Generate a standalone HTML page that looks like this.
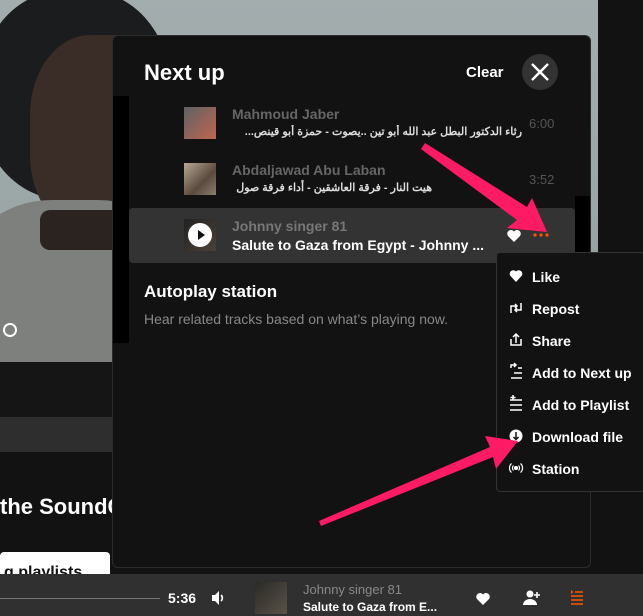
<!DOCTYPE html>
<html><head><meta charset="utf-8"><style>
*{margin:0;padding:0;box-sizing:border-box}
body{width:643px;height:616px;overflow:hidden;background:#121212;font-family:"Liberation Sans","Noto Sans CJK SC",sans-serif;position:relative;color:#fff}
.abs{position:absolute}
.b{font-weight:bold}
</style></head><body>
<!-- photo -->
<div class="abs" style="left:0;top:0;width:598px;height:362px;background:linear-gradient(180deg,#a3adae 0%,#9ba6a6 60%,#8e9592 100%);overflow:hidden">
 <div class="abs" style="left:-20px;top:-10px;width:190px;height:210px;border-radius:45%;background:#1a1c1e"></div>
 <div class="abs" style="left:30px;top:35px;width:150px;height:200px;border-radius:40%;background:#3a2c27"></div>
 <div class="abs" style="left:-40px;top:200px;width:230px;height:200px;border-radius:40%;background:#7d807c"></div>
 <div class="abs" style="left:40px;top:210px;width:90px;height:40px;background:#2a2320;border-radius:10px"></div>
 <div class="abs" style="left:3px;top:323px;width:14px;height:14px;border:2px solid #fff;border-radius:50%"></div>
</div>
<div class="abs" style="left:0;top:362px;width:598px;height:55px;background:#151515"></div>
<div class="abs" style="left:0;top:417px;width:598px;height:35px;background:#2e2e2e"></div>
<div class="abs b" style="left:0;top:494px;font-size:22px;white-space:nowrap">the SoundCloud</div>
<div class="abs" style="left:0;top:552px;width:110px;height:30px;background:#fff;border-radius:4px;color:#111;font-weight:bold;font-size:16px;padding:12px 0 0 4px;overflow:hidden">g playlists</div>
<!-- panel -->
<div class="abs" style="left:112px;top:35px;width:479px;height:533px;background:#121212;border:1px solid #2c2c2c;border-radius:6px;overflow:hidden">
 <div class="abs" style="left:0;top:60px;width:16px;height:247px;background:#000"></div>
 <div class="abs" style="left:462px;top:160px;width:16px;height:70px;background:#000"></div>
 <div class="abs b" style="left:31px;top:24px;font-size:22px">Next up</div>
 <div class="abs b" style="left:353px;top:28px;font-size:15px">Clear</div>
 <div class="abs" style="left:409px;top:18px;width:36px;height:36px;border-radius:50%;background:#333"><svg width="36" height="36"><path d="M10 10L26 26M26 10L10 26" stroke="#fff" stroke-width="2.4"/></svg></div>
 <!-- row1 -->
 <div class="abs" style="left:71px;top:71px;width:32px;height:32px;background:linear-gradient(135deg,#5d6266,#c0654f)"></div>
 <div class="abs b" style="left:119px;top:70px;font-size:14px;color:#666">Mahmoud Jaber</div>
 <div class="abs b" style="left:119px;top:89px;font-size:11px;color:#ddd;white-space:nowrap;width:290px;overflow:hidden;direction:rtl">رثاء الدكتور البطل عبد الله أبو تين ..يصوت - حمزة أبو قينص...</div>
 <div class="abs" style="left:416px;top:80px;font-size:13px;color:#555">6:00</div>
 <!-- row2 -->
 <div class="abs" style="left:71px;top:127px;width:32px;height:32px;background:linear-gradient(135deg,#b7a995,#5a4a3e 60%,#8a8170)"></div>
 <div class="abs b" style="left:119px;top:126px;font-size:14px;color:#666">Abdaljawad Abu Laban</div>
 <div class="abs b" style="left:119px;top:145px;font-size:11px;color:#ddd;white-space:nowrap;direction:rtl;width:200px;text-align:right">هيت النار - فرقة العاشقين - أداء فرقة صول</div>
 <div class="abs" style="left:416px;top:136px;font-size:13px;color:#555">3:52</div>
 <!-- row3 -->
 <div class="abs" style="left:16px;top:172px;width:446px;height:55px;background:#333;border-radius:4px"></div>
 <div class="abs" style="left:71px;top:183px;width:32px;height:32px;background:linear-gradient(135deg,#222,#4a4036)"></div>
 <div class="abs" style="left:75px;top:187px;width:24px;height:24px;border-radius:50%;background:#fff"><svg width="24" height="24"><path d="M10 7L17 12L10 17Z" fill="#111"/></svg></div>
 <div class="abs b" style="left:119px;top:182px;font-size:14px;color:#777">Johnny singer 81</div>
 <div class="abs b" style="left:119px;top:201px;font-size:14px;color:#fff;white-space:nowrap">Salute to Gaza from Egypt - Johnny ...</div>
 <svg class="abs" style="left:394px;top:193px" width="14" height="13"><path d="M7 13L1 7A3.3 3.3 0 0 1 7 2.5A3.3 3.3 0 0 1 13 7Z" fill="#fff"/></svg>
 <div class="abs b" style="left:31px;top:246px;font-size:17px">Autoplay station</div>
 <div class="abs" style="left:31px;top:275px;font-size:14px;color:#888">Hear related tracks based on what’s playing now.</div>
</div>
<!-- menu -->
<div class="abs" style="left:496px;top:252px;width:150px;height:240px;background:#121212;border:1px solid #333;border-radius:4px">
 <div class="abs b" style="left:35px;top:15px;font-size:14px;line-height:18px">Like</div>
 <div class="abs b" style="left:35px;top:47px;font-size:14px;line-height:18px">Repost</div>
 <div class="abs b" style="left:35px;top:79px;font-size:14px;line-height:18px">Share</div>
 <div class="abs b" style="left:35px;top:111px;font-size:14px;line-height:18px;white-space:nowrap">Add to Next up</div>
 <div class="abs b" style="left:35px;top:143px;font-size:14px;line-height:18px;white-space:nowrap">Add to Playlist</div>
 <div class="abs b" style="left:35px;top:175px;font-size:14px;line-height:18px;white-space:nowrap">Download file</div>
 <div class="abs b" style="left:35px;top:207px;font-size:14px;line-height:18px">Station</div>
 <svg class="abs" style="left:12px;top:16px" width="16" height="220" fill="none" stroke="#fff" stroke-width="1.5">
  <path d="M7 13L1.5 7A3.2 3.2 0 0 1 7 2.5A3.2 3.2 0 0 1 12.5 7Z" fill="#fff" stroke="none"/>
  <path d="M2 44V37H8M6 35L8 37L6 39M12 34V41H6M8 39L6 41L8 43"/>
  <path d="M2 70V76H12V70M7 74V65M4 68L7 65L10 68"/>
  <path d="M2 109H13M5 104H13M2 99V96H6M5 94L7 96L5 98M9 99H13"/>
  <path d="M1 141H13M1 136H13M1 131H13M4 126V131M1.5 128.5H6.5"/>
  <circle cx="7" cy="167" r="6.5" fill="#fff" stroke="none"/><path d="M7 163V170M4.5 168L7 170.5L9.5 168" stroke="#121212"/>
  <circle cx="7" cy="199" r="1.3" fill="#fff"/><path d="M4.5 196.5A3.5 3.5 0 0 0 4.5 201.5M9.5 196.5A3.5 3.5 0 0 1 9.5 201.5M2.5 194.5A6 6 0 0 0 2.5 203.5M11.5 194.5A6 6 0 0 1 11.5 203.5" stroke-width="1.2"/>
 </svg>
</div>
<!-- player bar -->
<div class="abs" style="left:0;top:574px;width:643px;height:42px;background:#303030"></div>
<div class="abs" style="left:0;top:598px;width:160px;height:1px;background:#777"></div>
<div class="abs b" style="left:168px;top:590px;font-size:14px">5:36</div>
<svg class="abs" style="left:211px;top:590px" width="16" height="16"><path d="M1 5H4L8 1V15L4 11H1Z" fill="#fff"/><path d="M10 5A4 4 0 0 1 10 11" stroke="#fff" stroke-width="1.6" fill="none"/></svg>
<div class="abs" style="left:255px;top:582px;width:32px;height:32px;background:linear-gradient(135deg,#2a2a26,#5a5248)"></div>
<div class="abs" style="left:303px;top:582px;font-size:13px;color:#888">Johnny singer 81</div>
<div class="abs b" style="left:303px;top:600px;font-size:12px">Salute to Gaza from E...</div>
<svg class="abs" style="left:476px;top:592px" width="14" height="13"><path d="M7 13L1 7A3.3 3.3 0 0 1 7 2.5A3.3 3.3 0 0 1 13 7Z" fill="#fff"/></svg>
<svg class="abs" style="left:523px;top:590px" width="18" height="16"><circle cx="7" cy="4" r="3.5" fill="#fff"/><path d="M0 15A7 6 0 0 1 14 15Z" fill="#fff"/><path d="M14 2V8M11 5H17" stroke="#fff" stroke-width="1.6"/></svg>
<svg class="abs" style="left:570px;top:590px" width="14" height="16" stroke="#f50" stroke-width="1.5"><path d="M1 14H13M1 10H13M1 6H13M5 2H13"/><path d="M1 0V4L3.5 2Z" fill="#f50" stroke="none"/></svg>
<!-- arrows -->
<svg class="abs" style="left:0;top:0" width="643" height="616">
 <polygon points="421,149 425,143 527,207 532,198 547,232 507,228 517,220" fill="#ff1a66"/>
 <polygon points="321,526 319,521 490,447 485,436 518,441 496,469 493,457" fill="#ff1a66"/>
 <circle cx="535" cy="235" r="1.6" fill="#f50"/><circle cx="541" cy="235" r="1.6" fill="#f50"/><circle cx="547" cy="235" r="1.6" fill="#f50"/>
</svg>
</body></html>
